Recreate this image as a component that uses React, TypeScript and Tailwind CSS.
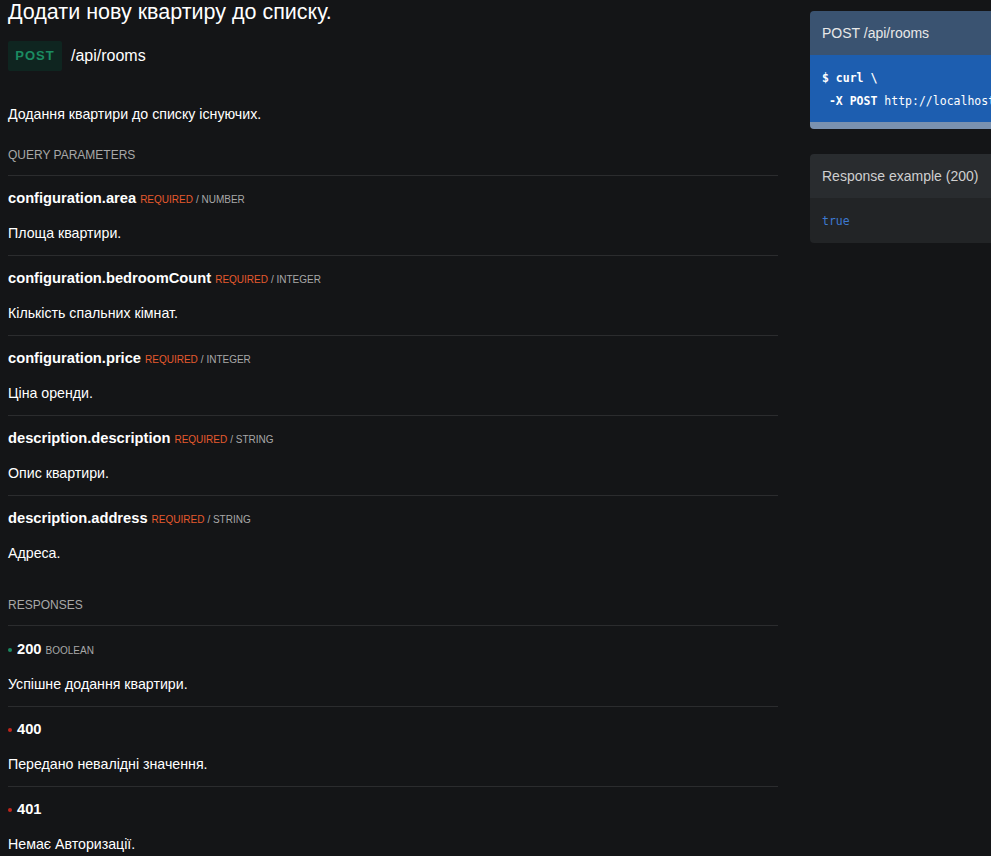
import React from "react";

const params = [
  { name: "configuration.area", type: "NUMBER", desc: "Площа квартири." },
  { name: "configuration.bedroomCount", type: "INTEGER", desc: "Кількість спальних кімнат." },
  { name: "configuration.price", type: "INTEGER", desc: "Ціна оренди." },
  { name: "description.description", type: "STRING", desc: "Опис квартири." },
  { name: "description.address", type: "STRING", desc: "Адреса." },
];

const responses = [
  { code: "200", type: "BOOLEAN", desc: "Успішне додання квартири.", ok: true },
  { code: "400", type: "", desc: "Передано невалідні значення.", ok: false },
  { code: "401", type: "", desc: "Немає Авторизації.", ok: false },
];

export default function App() {
  return (
    <div
      className="w-[991px] h-[856px] overflow-hidden bg-[#141517] text-white flex"
      style={{ fontFamily: '"Liberation Sans", Arial, sans-serif' }}
    >
      <div className="w-[778px] shrink-0 pl-2 flex flex-col">
        <h1 className="text-[21.5px] leading-[24px] text-white">Додати нову квартиру до списку.</h1>
        <div className="flex items-center mt-[17px] gap-[9px]">
          <span className="w-[54px] h-[30px] rounded-[2px] bg-[#0f2520] text-[#1b8b62] text-[13px] font-bold tracking-[1px] flex items-center justify-center">
            POST
          </span>
          <span className="text-[16px] text-white">/api/rooms</span>
        </div>
        <p className="text-[14.2px] leading-[16px] mt-[35px]">Додання квартири до списку існуючих.</p>
        <div className="text-[12px] leading-[14px] text-[#a8a8a8] mt-[26px]">QUERY PARAMETERS</div>
        <div className="mt-[13px]">
          {params.map((p, i) => (
            <div
              key={p.name}
              className={
                "border-t border-[#2b2c2e] pt-[14px] " + (i === params.length - 1 ? "pb-[15px]" : "pb-[14px]")
              }
            >
              <div className="flex items-baseline leading-[16px] h-[18px]">
                <span className="text-[14.7px] font-bold">{p.name}</span>
                <span className="text-[10px] text-[#e65a2e] ml-[4px]">REQUIRED</span>
                <span className="text-[10px] text-[#a8a8a8] ml-[3px]">/ {p.type}</span>
              </div>
              <div className="text-[14.2px] leading-[16px] mt-[17px]">{p.desc}</div>
            </div>
          ))}
        </div>
        <div className="text-[12px] leading-[14px] text-[#a8a8a8] mt-[22px]">RESPONSES</div>
        <div className="mt-[13px]">
          {responses.map((r, i) => (
            <div
              key={r.code}
              className={"border-t border-[#2b2c2e] pb-[14px] " + (i === 0 ? "pt-[15px]" : "pt-[14px]")}
            >
              <div className="flex items-baseline leading-[16px] h-[18px]">
                <span
                  className={
                    "inline-block w-[4px] h-[4px] rounded-full mr-[5px] self-center " +
                    (r.ok ? "bg-[#1b8b62]" : "bg-[#c0261c]")
                  }
                />
                <span className="text-[14.7px] font-bold">{r.code}</span>
                {r.type && <span className="text-[10px] text-[#a8a8a8] ml-[4px]">{r.type}</span>}
              </div>
              <div className="text-[14.2px] leading-[16px] mt-[17px]">{r.desc}</div>
            </div>
          ))}
        </div>
      </div>
      <div className="ml-[32px] w-[360px] shrink-0 pt-[11px] flex flex-col gap-[25px]">
        <div className="rounded-[4px] overflow-hidden">
          <div className="h-[44px] bg-[#3a5371] px-[12px] flex items-center text-[14px] text-[#e8e8e8]">
            POST /api/rooms
          </div>
          <div
            className="bg-[#1d5eb0] px-[12px] pt-[12px] pb-[9px] text-[11.5px] leading-[23px] text-white whitespace-pre"
            style={{ fontFamily: '"DejaVu Sans Mono", monospace' }}
          >
            <div>
              <span className="font-bold">$ curl \</span>
            </div>
            <div>
              <span className="font-bold"> -X POST</span> http://localhost:8080/api/rooms \
            </div>
          </div>
          <div className="h-[7px] bg-[#7a92b0]" />
        </div>
        <div className="rounded-[4px] overflow-hidden">
          <div className="h-[44px] bg-[#292c2f] px-[12px] flex items-center text-[14px] text-[#cfcfcf]">
            Response example (200)
          </div>
          <div
            className="bg-[#222426] px-[12px] pt-[3px] h-[45px] flex items-center text-[11.5px] text-[#3d79d0]"
            style={{ fontFamily: '"DejaVu Sans Mono", monospace' }}
          >
            true
          </div>
        </div>
      </div>
    </div>
  );
}
